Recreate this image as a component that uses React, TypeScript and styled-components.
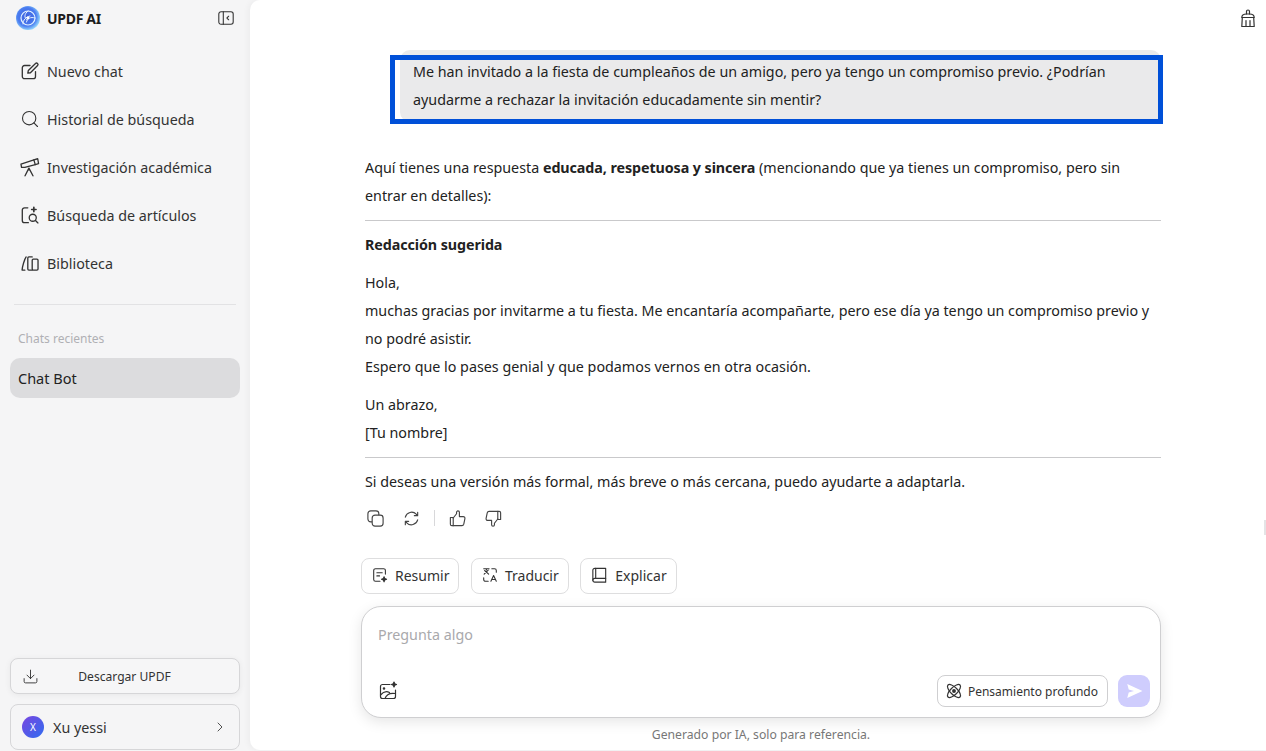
import React from 'react';
import styled, { createGlobalStyle } from 'styled-components';
import { ChevronRight, Search, Download } from 'lucide-react';

const GlobalStyle = createGlobalStyle`
  html, body { margin: 0; padding: 0; height: 100%; }
  body { font-family: "Noto Sans", "Liberation Sans", sans-serif; color: #222; overflow: hidden; }
`;

const Page = styled.div`
  display: flex;
  width: 1266px;
  height: 751px;
  background: #f5f5f6;
  overflow: hidden;
`;

const Sidebar = styled.aside`
  display: flex;
  flex-direction: column;
  width: 250px;
  flex-shrink: 0;
  padding: 0 10px 1px;
  box-sizing: border-box;
`;

const Brand = styled.div`
  display: flex;
  align-items: center;
  height: 36px;
  padding: 0 5px 0 6px;
  gap: 7px;
`;

const BrandName = styled.span`
  flex: 1;
  font-size: 14px;
  font-weight: 700;
  letter-spacing: -0.3px;
  color: #1c1c1c;
`;

const NavList = styled.nav`
  display: flex;
  flex-direction: column;
  margin-top: 11px;
`;

const NavItem = styled.div`
  display: flex;
  align-items: center;
  gap: 6px;
  height: 48px;
  padding-left: 9px;
  font-size: 14.3px;
  color: #333;
  svg { flex-shrink: 0; }
`;

const Divider = styled.hr`
  border: 0;
  height: 1px;
  background: #e2e2e4;
  margin: 17px 4px 0;
`;

const SectionLabel = styled.div`
  font-size: 12px;
  color: #b0b0b4;
  margin: 25px 0 0 8px;
  line-height: 17px;
`;

const RecentChat = styled.div`
  display: flex;
  align-items: center;
  height: 40px;
  margin-top: 11px;
  padding-left: 8px;
  border-radius: 10px;
  background: #dcdcde;
  font-size: 14.5px;
  color: #222;
`;

const SidebarFooter = styled.div`
  display: flex;
  flex-direction: column;
  gap: 10px;
  margin-top: auto;
`;

const DownloadButton = styled.div`
  display: flex;
  align-items: center;
  height: 36px;
  box-sizing: border-box;
  padding: 0 11px;
  border: 1px solid #d6d6d8;
  border-radius: 8px;
  background: #f6f6f7;
  box-shadow: 0 1px 6px rgba(0, 0, 0, 0.06);
  font-size: 12.1px;
  color: #333;
`;

const DownloadLabel = styled.span`
  flex: 1;
  text-align: center;
  padding-right: 18px;
`;

const UserRow = styled.div`
  display: flex;
  align-items: center;
  gap: 9px;
  height: 46px;
  box-sizing: border-box;
  padding: 0 11px;
  border: 1px solid #d6d6d8;
  border-radius: 8px;
  font-size: 14.3px;
  color: #333;
`;

const Avatar = styled.span`
  display: flex;
  align-items: center;
  justify-content: center;
  width: 22px;
  height: 22px;
  border-radius: 50%;
  background: linear-gradient(135deg, #7a45e0, #2f6df0);
  color: #fff;
  font-size: 10px;
`;

const UserName = styled.span`
  flex: 1;
`;

const Main = styled.main`
  position: relative;
  flex: 1;
  display: flex;
  flex-direction: column;
  padding-left: 111px;
  background: #fff;
  border-radius: 10px 0 0 10px;
  box-shadow: -2px 0 6px rgba(0, 0, 0, 0.04);
  height: 750px;
`;

const ClearButton = styled.div`
  position: absolute;
  top: 8px;
  right: 8px;
  line-height: 0;
`;

const ScrollThumb = styled.div`
  position: absolute;
  top: 520px;
  right: 0;
  width: 2px;
  height: 15px;
  background: #e4e4e6;
`;

const Column = styled.div`
  display: flex;
  flex-direction: column;
  width: 800px;
`;

const Thread = styled.div`
  padding: 0 0 0 4px;
  font-size: 14.3px;
  line-height: 28px;
  color: #222;
  b { letter-spacing: -0.08px; }
`;

const UserMessage = styled.div`
  position: relative;
  margin: 50px 0 32px 35px;
  padding: 8px 13px;
  border-radius: 10px;
  background: #eaeaeb;
`;

const Highlight = styled.div`
  position: absolute;
  left: -10px;
  right: -2px;
  top: 5px;
  bottom: -2px;
  border: 5px solid #0050d8;
`;

const Paragraph = styled.p`
  margin: 0;
`;

const SpacedParagraph = styled(Paragraph)`
  margin-top: 10px;
`;

const Rule = styled.hr`
  border: 0;
  height: 1px;
  background: #c9c9cb;
  margin: 10px 0;
`;

const Actions = styled.div`
  display: flex;
  align-items: center;
  gap: 17px;
  height: 22px;
  margin: 11px 0 0 1px;
`;

const ActionSep = styled.span`
  width: 1px;
  height: 16px;
  background: #d8d8da;
  margin: 0 -4px;
`;

const Chips = styled.div`
  display: flex;
  gap: 11.5px;
  margin-top: 29px;
`;

const Chip = styled.div`
  display: flex;
  align-items: center;
  gap: 6px;
  height: 36px;
  padding: 0 9px 2px;
  box-sizing: border-box;
  border: 1px solid #dededf;
  border-radius: 8px;
  font-size: 14px;
  color: #333;
`;

const Composer = styled.div`
  display: flex;
  flex-direction: column;
  height: 112px;
  box-sizing: border-box;
  margin-top: 12px;
  padding: 17px 10px 10px 16px;
  border: 1px solid #cfcfd1;
  border-radius: 20px;
  background: #fff;
  box-shadow: 0 4px 14px rgba(0, 0, 0, 0.1);
`;

const Placeholder = styled.div`
  font-size: 14.3px;
  line-height: 22px;
  color: #a9a9ac;
`;

const ComposerBar = styled.div`
  display: flex;
  align-items: center;
  margin-top: auto;
`;

const DeepThink = styled.div`
  display: flex;
  align-items: center;
  gap: 4px;
  height: 32px;
  box-sizing: border-box;
  margin-left: auto;
  padding: 0 9px 0 6px;
  border: 1px solid #cfcfd1;
  border-radius: 8px;
  font-size: 12px;
  color: #333;
`;

const SendButton = styled.div`
  display: flex;
  align-items: center;
  justify-content: center;
  width: 32px;
  height: 32px;
  margin-left: 10px;
  border-radius: 9px;
  background: #cfcdfd;
`;

const Disclaimer = styled.div`
  text-align: center;
  font-size: 12.2px;
  line-height: 16px;
  margin-top: 9px;
  color: #777;
`;

const Icon: React.FC<{ size?: number; color?: string; children: React.ReactNode }> = ({ size = 20, color = '#333', children }) => (
  <svg width={size} height={size} viewBox="0 0 20 20" fill="none" stroke={color} strokeWidth="1.2" strokeLinecap="round" strokeLinejoin="round">
    {children}
  </svg>
);

const Logo = () => (
  <svg width="24" height="24" viewBox="0 0 24 24" fill="none">
    <defs>
      <radialGradient id="logoFill" cx="0.45" cy="0.45" r="0.55">
        <stop offset="0" stopColor="#3d5fdc" />
        <stop offset="0.7" stopColor="#4a7cf0" />
        <stop offset="1" stopColor="#8fd0fb" />
      </radialGradient>
    </defs>
    <circle cx="12" cy="12" r="12" fill="url(#logoFill)" />
    <circle cx="12" cy="12" r="7" stroke="#e4f2ff" strokeWidth="1.2" />
    <path d="M12 5c-4 3-4 7-1 9M19 12c-4.500-1.500-8 .500-8.500 4M7 18c0-4 2.500-7 7-8" stroke="#e4f2ff" strokeWidth="1" strokeLinecap="round" />
    <circle cx="12" cy="12" r="1.400" fill="#fff" />
  </svg>
);

export default function App() {
  return (
    <Page>
      <GlobalStyle />
      <Sidebar>
        <Brand>
          <Logo />
          <BrandName>UPDF AI</BrandName>
          <Icon size={18}>
            <rect x="2" y="3" width="16" height="14" rx="2.500" />
            <path d="M7 3v14M13 8l-2 2 2 2" />
          </Icon>
        </Brand>
        <NavList>
          <NavItem>
            <Icon size={22}>
              <path d="M15 10.500V15a2 2 0 0 1-2 2H5a2 2 0 0 1-2-2V7a2 2 0 0 1 2-2h5" />
              <path d="M8 12l.5-2.500L15 3.200a1.300 1.300 0 0 1 1.900 1.800L10.400 11.600z" />
            </Icon>
            Nuevo chat
          </NavItem>
          <NavItem>
            <Search size={20} strokeWidth={1.3} color="#333" style={{ margin: '0 1px' }} />
            Historial de búsqueda
          </NavItem>
          <NavItem>
            <Icon size={22}>
              <path d="M1.800 7.300L13.500 3.500l1.300 4.300-9.500 2.600H2.300z" />
              <path d="M13.500 3.500l3.500-1 .8 4.500-3 .8" />
              <path d="M9 11l-3.500 7M9 11l3.700 7M9 11v1.500" />
            </Icon>
            Investigación académica
          </NavItem>
          <NavItem>
            <Icon size={22}>
              <path d="M8 3.500H5a2 2 0 0 0-2 2v9.500a2 2 0 0 0 2 2h3.500" />
              <circle cx="12.500" cy="12.500" r="3.200" />
              <path d="M15 15l2.200 2.200" />
              <path d="M13.500 3v4M11.500 5h4" strokeWidth="1.500" />
            </Icon>
            Búsqueda de artículos
          </NavItem>
          <NavItem>
            <Icon size={22}>
              <path d="M6.500 4.500C5 6.500 3 13 2.800 16.500h2.500" />
              <path d="M12 4.500H9a1 1 0 0 0-1 1v10a1 1 0 0 0 1 1h3" />
              <rect x="12" y="6.500" width="5.300" height="10" rx="1" />
            </Icon>
            Biblioteca
          </NavItem>
        </NavList>
        <Divider />
        <SectionLabel>Chats recientes</SectionLabel>
        <RecentChat>Chat Bot</RecentChat>
        <SidebarFooter>
          <DownloadButton>
            <Download size={17} strokeWidth={1.3} color="#333" />
            <DownloadLabel>Descargar UPDF</DownloadLabel>
          </DownloadButton>
          <UserRow>
            <Avatar>X</Avatar>
            <UserName>Xu yessi</UserName>
            <ChevronRight size={16} strokeWidth={1.4} color="#444" />
          </UserRow>
        </SidebarFooter>
      </Sidebar>
      <Main>
        <ClearButton>
          <Icon>
            <path d="M8.500 6V3.500a1.500 1.500 0 0 1 3 0V6" />
            <path d="M3.800 9.500c0-2 2-3.500 4.700-3.500h3c2.700 0 4.700 1.500 4.700 3.500z" />
            <path d="M4.300 9.500L3.800 18.500h12.400l-.5-9M8 12.500v6M12 12.500v6" />
          </Icon>
        </ClearButton>
        <ScrollThumb />
        <Column>
          <Thread>
            <UserMessage>
              Me han invitado a la fiesta de cumpleaños de un amigo, pero ya tengo un compromiso previo. ¿Podrían ayudarme a rechazar la invitación educadamente sin mentir?
              <Highlight />
            </UserMessage>
            <Paragraph>
              Aquí tienes una respuesta <b>educada, respetuosa y sincera</b> (mencionando que ya tienes un compromiso, pero sin entrar en detalles):
            </Paragraph>
            <Rule />
            <Paragraph><b>Redacción sugerida</b></Paragraph>
            <SpacedParagraph>
              Hola,<br />
              muchas gracias por invitarme a tu fiesta. Me encantaría acompañarte, pero ese día ya tengo un compromiso previo y no podré asistir.<br />
              Espero que lo pases genial y que podamos vernos en otra ocasión.
            </SpacedParagraph>
            <SpacedParagraph>
              Un abrazo,<br />
              [Tu nombre]
            </SpacedParagraph>
            <Rule />
            <Paragraph>Si deseas una versión más formal, más breve o más cercana, puedo ayudarte a adaptarla.</Paragraph>
            <Actions>
              <Icon size={19} color="#444">
                <rect x="2" y="2" width="11.500" height="11.500" rx="3" />
                <rect x="6.500" y="6.500" width="11.500" height="11.500" rx="3" fill="#fff" />
              </Icon>
              <Icon size={19} color="#444">
                <path d="M3.500 8.500A6.800 6.800 0 0 1 15 5.500l1.500 1.500M16.500 3.500V7H13" />
                <path d="M16.500 11.500A6.800 6.800 0 0 1 5 14.500L3.500 13M3.500 16.500V13H7" />
              </Icon>
              <ActionSep />
              <Icon size={19} color="#444">
                <path d="M2.500 9h3v8.500h-1.500a1.500 1.500 0 0 1-1.500-1.500z" />
                <path d="M5.500 9.500L9 5V3.500a1.500 1.500 0 0 1 3 0V8h4a1.800 1.800 0 0 1 1.800 2.200l-1.200 5.800a2 2 0 0 1-2 1.500H5.500" />
              </Icon>
              <Icon size={19} color="#444">
                <path d="M17.500 11h-3V2.500H16a1.500 1.500 0 0 1 1.500 1.500z" />
                <path d="M14.500 10.500L11 15v1.500a1.500 1.500 0 0 1-3 0V12H4a1.800 1.800 0 0 1-1.800-2.200l1.200-5.800a2 2 0 0 1 2-1.500h9.100" />
              </Icon>
            </Actions>
          </Thread>
          <Chips>
            <Chip>
              <Icon size={18}>
                <path d="M16 9V5a2 2 0 0 0-2-2H5a2 2 0 0 0-2 2v10a2 2 0 0 0 2 2h5" />
                <path d="M6.500 7.500h6M6.500 11h3" />
                <path d="M14.500 12l.8 2 2 .8-2 .8-.8 2-.8-2-2-.8 2-.8z" fill="#333" />
              </Icon>
              Resumir
            </Chip>
            <Chip>
              <Icon size={18}>
                <path d="M3 3h6M6 3v1.500M3.500 9L8 4.500M4 5l4.500 4" />
                <path d="M12 3h3a2 2 0 0 1 2 2v2M8 17H5a2 2 0 0 1-2-2v-2" />
                <path d="M11 17l3-6.500 3 6.500M12 15h4" />
              </Icon>
              Traducir
            </Chip>
            <Chip>
              <Icon size={19}>
                <path d="M5 2.500h11.500V17H5a2 2 0 0 1-2-2V4.500a2 2 0 0 1 2-2z" />
                <path d="M3 15a2 2 0 0 1 2-2h11.500M6 2.500V13" />
              </Icon>
              Explicar
            </Chip>
          </Chips>
          <Composer>
            <Placeholder>Pregunta algo</Placeholder>
            <ComposerBar>
              <Icon>
                <path d="M12 3.500H4.500a2 2 0 0 0-2 2v10a2 2 0 0 0 2 2h11a2 2 0 0 0 2-2V9" />
                <circle cx="6" cy="7.500" r="0.700" />
                <path d="M2.500 14c3-3.500 6-4 9-2.500M7 17.500c1-3 4-6 10.500-5" />
                <path d="M16 1l.7 1.800 1.800.7-1.800.7-.7 1.800-.7-1.800-1.800-.7 1.800-.7z" fill="#333" />
              </Icon>
              <DeepThink>
                <Icon size={20}>
                  <ellipse cx="10" cy="10" rx="8.500" ry="3.600" transform="rotate(45 10 10)" />
                  <ellipse cx="10" cy="10" rx="8.500" ry="3.600" transform="rotate(-45 10 10)" />
                  <circle cx="10" cy="10" r="1.300" fill="#333" />
                </Icon>
                Pensamiento profundo
              </DeepThink>
              <SendButton>
                <svg width="18" height="18" viewBox="0 0 16 16">
                  <path d="M2 1.800L15.500 8 2 14.200 3.300 9.300 8 8 3.300 6.700z" fill="#fff" />
                </svg>
              </SendButton>
            </ComposerBar>
          </Composer>
          <Disclaimer>Generado por IA, solo para referencia.</Disclaimer>
        </Column>
      </Main>
    </Page>
  );
}
